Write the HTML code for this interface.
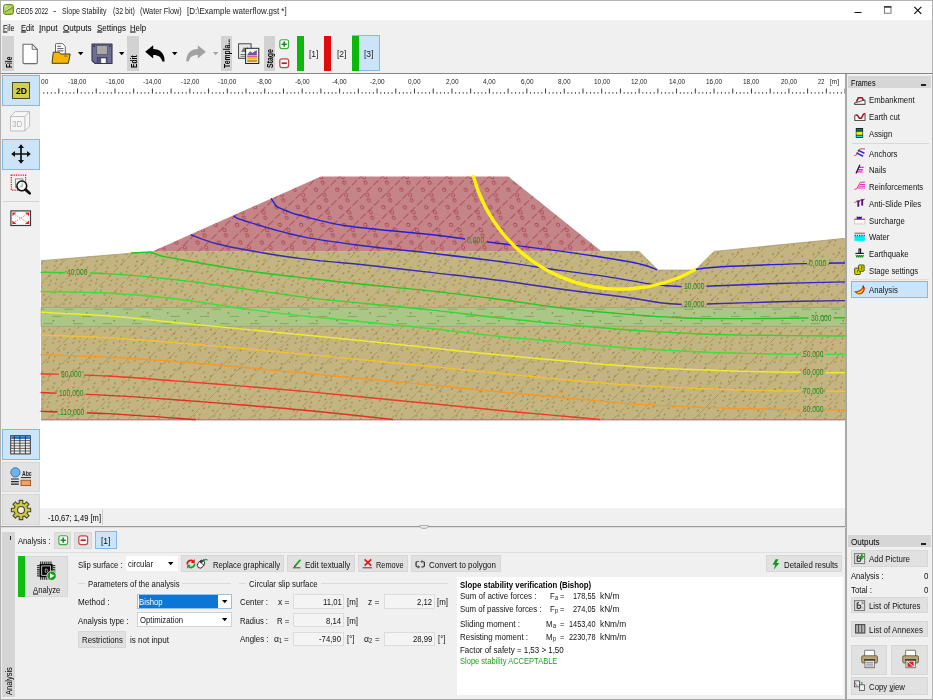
<!DOCTYPE html>
<html lang="en"><head><meta charset="utf-8"><title>GEO5 2022 - Slope Stability</title>
<style>
html,body{margin:0;padding:0}
body{width:933px;height:700px;position:relative;overflow:hidden;background:#f0f0f0;font-family:"Liberation Sans", sans-serif;font-size:18px;color:#000}
#app{position:absolute;left:0;top:0;width:933px;height:700px;will-change:transform;transform:translateZ(0)}
.a{position:absolute}
.t{position:absolute;white-space:nowrap;line-height:1;transform-origin:0 0;font-size:18px}
svg{position:absolute;overflow:visible}
u{text-decoration-thickness:1.6px;text-underline-offset:1.5px}

</style></head>
<body>
<div id="app">
<div class="a" style="left:0px;top:0px;width:933px;height:20px;background:#ffffff;"></div>
<svg style="left:3px;top:4px" width="11" height="11" viewBox="0 0 11 11"><defs><linearGradient id="gai" x1="0" y1="0" x2="1" y2="1"><stop offset="0" stop-color="#dfe9a8"/><stop offset=".45" stop-color="#a9c94e"/><stop offset="1" stop-color="#5d9a24"/></linearGradient></defs><rect x=".6" y=".6" width="9.8" height="9.8" rx="2" fill="url(#gai)" stroke="#4f8a1e" stroke-width="1"/><path d="M1.4 9.6L9.6 5.2V9Q9.6 9.6 9 9.6Z" fill="#c9da44" opacity=".85"/><path d="M2.2 7.6L8.8 3.4" stroke="#4a6a2a" stroke-width=".8"/><path d="M2.2 6.6L8.8 2.5" stroke="#f0f6d4" stroke-width=".8"/></svg>
<span class="t" style="left:16.10px;top:5.75px;color:#1a1a1a;transform:scale(0.3387,.5);">GEO5 2022</span>
<span class="t" style="left:53.10px;top:5.75px;color:#1a1a1a;transform:scale(0.5667,.5);">-</span>
<span class="t" style="left:61.70px;top:5.75px;color:#1a1a1a;transform:scale(0.3892,.5);">Slope Stability</span>
<span class="t" style="left:112.50px;top:5.75px;color:#1a1a1a;transform:scale(0.3909,.5);">(32 bit)</span>
<span class="t" style="left:139.90px;top:5.75px;color:#1a1a1a;transform:scale(0.4084,.5);">(Water Flow)</span>
<span class="t" style="left:186.50px;top:5.75px;color:#1a1a1a;transform:scale(0.4449,.5);">[D:\Example waterflow.gst *]</span>
<svg style="left:0;top:0" width="933" height="20" viewBox="0 0 933 20"><path d="M854.5 12.5H861.5" stroke="#111" stroke-width="1"/><rect x="884.4" y="6.9" width="6.6" height="6.3" fill="none" stroke="#6a6a6a" stroke-width=".9"/><path d="M884 6.9H891.4" stroke="#1a1a1a" stroke-width="1.3"/><path d="M914.3 6.8L921.3 13.8M921.3 6.8L914.3 13.8" stroke="#111" stroke-width="1.2"/></svg>
<span class="t" style="left:3.00px;top:23.15px;transform:scale(0.3963,.5);"><u>F</u>ile</span>
<span class="t" style="left:20.50px;top:23.15px;transform:scale(0.4189,.5);"><u>E</u>dit</span>
<span class="t" style="left:39.00px;top:23.15px;transform:scale(0.4618,.5);"><u>I</u>nput</span>
<span class="t" style="left:62.50px;top:23.15px;transform:scale(0.4519,.5);"><u>O</u>utputs</span>
<span class="t" style="left:96.50px;top:23.15px;transform:scale(0.4457,.5);"><u>S</u>ettings</span>
<span class="t" style="left:130.00px;top:23.15px;transform:scale(0.4321,.5);"><u>H</u>elp</span>
<div class="a" style="left:2px;top:35.6px;width:12.4px;height:35.4px;background:#d2d2d2;"></div>
<div class="a" style="left:127px;top:35.6px;width:11.8px;height:35.4px;background:#d2d2d2;"></div>
<div class="a" style="left:220.5px;top:35.6px;width:11.8px;height:35.4px;background:#d2d2d2;"></div>
<div class="a" style="left:263.8px;top:35.6px;width:11.7px;height:35.4px;background:#d2d2d2;"></div>
<span class="t" style="left:4.12px;top:68.20px;font-weight:bold;transform:rotate(-90deg) scale(0.3643,.5);">File</span>
<span class="t" style="left:128.72px;top:68.20px;font-weight:bold;transform:rotate(-90deg) scale(0.3706,.5);">Edit</span>
<span class="t" style="left:222.22px;top:68.40px;font-weight:bold;transform:rotate(-90deg) scale(0.3782,.5);">Templa...</span>
<span class="t" style="left:265.42px;top:68.40px;font-weight:bold;transform:rotate(-90deg) scale(0.3875,.5);">Stage</span>
<svg style="left:22px;top:42.5px" width="17" height="22" viewBox="0 0 17 22"><path d="M1 1.2H10.2L15.3 6.3V19.6Q15.3 20.6 14.3 20.6H2Q1 20.6 1 19.6Z" fill="#fff" stroke="#6e6e6e" stroke-width="1.1" stroke-linejoin="round"/><path d="M10.2 1.2V6.3H15.3" fill="none" stroke="#6e6e6e" stroke-width="1"/></svg>
<svg style="left:51px;top:42.5px" width="21" height="22" viewBox="0 0 21 22"><path d="M4.5 12V1.3Q4.5 .6 5.2 .6H11.5L14.3 3.4V12Z" fill="#fff" stroke="#555" stroke-width=".9"/><path d="M6.3 3.3H10M6.3 5.6H12.4M6.3 7.9H12.4" stroke="#444" stroke-width=".9"/><path d="M1 20.3L2.3 9.2H8.2L9.6 11H19.2L17.3 20.3Z" fill="#f7b500" stroke="#4a3a10" stroke-width="1" stroke-linejoin="round"/><path d="M13 13H16.4" stroke="#7a5a10" stroke-width=".9"/></svg>
<svg style="left:78px;top:51.8px" width="6" height="4" viewBox="0 0 6 4"><path d="M0 0H5.4L2.7 3.2Z" fill="#000"/></svg>
<svg style="left:91px;top:42.5px" width="22" height="22" viewBox="0 0 22 22"><path d="M1 1H21V20.5H4.2L1 17.5Z" fill="#6d6d98" stroke="#33334a" stroke-width="1.1" stroke-linejoin="round"/><rect x="5.6" y="2.6" width="10.8" height="9" fill="#a8a8a8" stroke="#55556e" stroke-width=".8"/><rect x="6.2" y="14.6" width="9.8" height="5.9" fill="#55557a" stroke="#33334a" stroke-width=".6"/><rect x="10.2" y="15.4" width="4.6" height="4.6" fill="#fff"/><rect x="2.3" y="2.3" width="1.6" height="1.6" fill="#33334a"/><rect x="18" y="2.3" width="1.6" height="1.6" fill="#33334a"/></svg>
<svg style="left:119px;top:51.8px" width="6" height="4" viewBox="0 0 6 4"><path d="M0 0H5.4L2.7 3.2Z" fill="#000"/></svg>
<svg style="left:144px;top:44px" width="22" height="19" viewBox="0 0 22 19"><path d="M1.2 7.8L9.2 1.2V5C16 5 20.8 9.4 20.6 17.4L18.4 17.6C17 12.9 14.4 10.9 9.2 11V14.6Z" fill="#000"/></svg>
<svg style="left:172.3px;top:51.8px" width="6" height="4" viewBox="0 0 6 4"><path d="M0 0H5.4L2.7 3.2Z" fill="#000"/></svg>
<svg style="left:185px;top:44px" width="22" height="19" viewBox="0 0 22 19"><path d="M20.8 7.8L12.8 1.2V5C6 5 1.2 9.4 1.4 17.4L3.6 17.6C5 12.9 7.6 10.9 12.8 11V14.6Z" fill="#a2a2a2"/></svg>
<svg style="left:213px;top:52px" width="6" height="4" viewBox="0 0 6 4"><path d="M0 0H5.4L2.7 3.2Z" fill="#a2a2a2"/></svg>
<svg style="left:237.5px;top:42.5px" width="22" height="22" viewBox="0 0 22 22"><rect x=".6" y=".8" width="12.5" height="14.5" fill="#e9e9e9" stroke="#333" stroke-width=".9"/><path d="M2.5 11.5H11M2.5 13.3H11" stroke="#555" stroke-width=".8"/><path d="M3 9L6 4L8 7L10 3.5V9Z" fill="#777"/><rect x="7.6" y="5.3" width="13.2" height="15.2" fill="#f4f4f4" stroke="#222" stroke-width="1"/><path d="M9.4 11.4L12.2 8.2L14.4 10L18.8 7V12.2H9.4Z" fill="#6a5a9a"/><rect x="9.2" y="12.6" width="10" height="2" fill="#e85aa0"/><rect x="9.2" y="14.8" width="10" height="2" fill="#f0c020"/><rect x="9.2" y="17" width="10" height="2.2" fill="#c89a28"/></svg>
<svg style="left:278.8px;top:38.6px" width="11" height="11" viewBox="0 0 11 11"><rect x=".8" y=".8" width="8.8" height="8.8" rx="2" fill="#f4fbf4" stroke="#3cae3c" stroke-width="1.1"/><path d="M5.2 2.6V7.8M2.6 5.2H7.8" stroke="#1a8a1a" stroke-width="1.5"/></svg>
<svg style="left:278.8px;top:57.5px" width="11" height="11" viewBox="0 0 11 11"><rect x=".8" y=".8" width="8.8" height="8.8" rx="2" fill="#fbf2f2" stroke="#c04848" stroke-width="1.2"/><path d="M2.6 5.2H7.8" stroke="#b02020" stroke-width="1.6"/></svg>
<div class="a" style="left:296.5px;top:35.8px;width:7.2px;height:35px;background:#0cb80c;"></div>
<span class="t" style="left:308.65px;top:49.35px;color:#222;transform:scale(0.4746,.5);">[1]</span>
<div class="a" style="left:324.3px;top:35.8px;width:7.1px;height:35px;background:#e20a0a;"></div>
<span class="t" style="left:336.55px;top:49.35px;color:#222;transform:scale(0.4746,.5);">[2]</span>
<div class="a" style="left:352px;top:35.2px;width:28px;height:36px;background:#cce4f7;border:1px solid #84b9e6;box-sizing:border-box;"></div>
<div class="a" style="left:352px;top:35.8px;width:7.1px;height:35px;background:#0cb80c;"></div>
<span class="t" style="left:364.25px;top:49.35px;color:#222;transform:scale(0.4746,.5);">[3]</span>
<div class="a" style="left:0px;top:73px;width:933px;height:1px;background:#868686;"></div>
<div class="a" style="left:0px;top:74px;width:1px;height:452px;background:#d9d9d9;"></div>
<div class="a" style="left:2px;top:75px;width:38.3px;height:31px;background:#cce4f7;border:1px solid #84b9e6;box-sizing:border-box;"></div>
<div class="a" style="left:12.2px;top:82.2px;width:17.6px;height:17px;background:#d2cd58;border:1px solid #4e4e26;box-sizing:border-box;"></div>
<span class="t" style="left:15.60px;top:85.99px;font-size:19.0px;font-weight:bold;transform:scale(0.4527,.5);">2D</span>
<svg style="left:10px;top:111px" width="21" height="21" viewBox="0 0 21 21"><path d="M.5 5.6L5.2 .6H19.6V15L14.9 20H.5Z" fill="#f7f7f7" stroke="#b8b8b8" stroke-width=".9" stroke-linejoin="round"/><path d="M.5 5.6H14.9V20M14.9 5.6L19.6 .6" fill="none" stroke="#b8b8b8" stroke-width=".9"/></svg>
<span class="t" style="left:12.45px;top:119.05px;color:#b4b4b4;transform:scale(0.4562,.5);">3D</span>
<div class="a" style="left:2px;top:138.6px;width:38.3px;height:31px;background:#cce4f7;border:1px solid #84b9e6;box-sizing:border-box;"></div>
<svg style="left:11px;top:144px" width="20" height="20" viewBox="0 0 20 20"><path d="M10 1.2V18.8M1.2 10H18.8" stroke="#111" stroke-width="1.7"/><path d="M10 .2L13 4H7ZM10 19.8L13 16H7ZM.2 10L4 7V13ZM19.8 10L16 7V13Z" fill="#111"/></svg>
<svg style="left:9.5px;top:173.5px" width="23" height="23" viewBox="0 0 23 23"><rect x="1.3" y="1.2" width="14.3" height="14.9" fill="none" stroke="#e02020" stroke-width="1.2" stroke-dasharray="1.3 1"/><rect x="5.4" y="4.9" width="7.4" height="8.4" fill="#f4f4f4" stroke="#777" stroke-width=".8"/><circle cx="11.8" cy="11.9" r="4.9" fill="#fff" fill-opacity=".75" stroke="#111" stroke-width="1.5"/><path d="M12.2 9.4V12.2H9.8" fill="none" stroke="#888" stroke-width=".7"/><path d="M15.6 15.6L19.6 19.2" stroke="#111" stroke-width="2.8" stroke-linecap="round"/></svg>
<div class="a" style="left:3px;top:201.2px;width:36px;height:1px;background:#d4d4d4;"></div>
<svg style="left:10px;top:209.5px" width="22" height="17" viewBox="0 0 22 17"><rect x=".9" y=".9" width="19.6" height="14.6" fill="#fff" stroke="#3a3a3a" stroke-width="1.2"/><path d="M4.6 4.2L16.8 12.2M16.8 4.2L4.6 12.2" stroke="#f07070" stroke-width=".9" stroke-dasharray="1.6 1"/><path d="M2.4 2.4H6.4L2.4 6Z M19 2.4H15L19 6Z M2.4 14H6.4L2.4 10.4Z M19 14H15L19 10.4Z" fill="#f01818"/></svg>
<div class="a" style="left:2px;top:429px;width:38.3px;height:31px;background:#cce4f7;border:1px solid #84b9e6;box-sizing:border-box;"></div>
<svg style="left:10.4px;top:434.6px" width="21" height="20" viewBox="0 0 21 20"><rect x=".7" y=".7" width="19.6" height="18.2" fill="#f2f2f2" stroke="#333" stroke-width="1"/><rect x="1.2" y="1.2" width="18.6" height="2.8" fill="#2a7ad8"/><path d="M1 5.6H20M1 8.2H20M1 10.8H20M1 13.4H20M1 16H20" stroke="#555" stroke-width=".9"/><path d="M4.3 1V19M9.9 1V19M15.4 1V19" stroke="#333" stroke-width=".9"/></svg>
<div class="a" style="left:2px;top:462.2px;width:38px;height:30.2px;background:#e2e2e2;border:1px solid #d7d7d7;box-sizing:border-box;"></div>
<svg style="left:10px;top:467px" width="23" height="21" viewBox="0 0 23 21"><circle cx="5.4" cy="5.4" r="4.6" fill="#6ab4f0" stroke="#2a5a8a" stroke-width=".8"/><path d="M1 12H8.8M1 14.6H8.8M1 17.2H8.8" stroke="#222" stroke-width="1.2"/><rect x="11" y="13.2" width="9.6" height="5.4" fill="#f4a060" stroke="#8a4a1a" stroke-width=".8"/><path d="M11 10.6H21" stroke="#222" stroke-width="1"/></svg>
<span class="t" style="left:21.50px;top:469.78px;font-size:14px;font-weight:bold;color:#222;transform:scale(0.3629,.5);">Abc</span>
<div class="a" style="left:2px;top:494px;width:38px;height:31.2px;background:#e2e2e2;border:1px solid #d7d7d7;box-sizing:border-box;"></div>
<svg style="left:11.3px;top:499.9px" width="20" height="20" viewBox="0 0 20 20"><g transform="translate(10 10)"><path d="M-1.75 -6.78L-1.79 -9.64L1.79 -9.64L1.75 -6.78L3.55 -6.03L5.55 -8.08L8.08 -5.55L6.03 -3.55L6.78 -1.75L9.64 -1.79L9.64 1.79L6.78 1.75L6.03 3.55L8.08 5.55L5.55 8.08L3.55 6.03L1.75 6.78L1.79 9.64L-1.79 9.64L-1.75 6.78L-3.55 6.03L-5.55 8.08L-8.08 5.55L-6.03 3.55L-6.78 1.75L-9.64 1.79L-9.64 -1.79L-6.78 -1.75L-6.03 -3.55L-8.08 -5.55L-5.55 -8.08L-3.55 -6.03Z" fill="#c9c84a" stroke="#4a4a22" stroke-width="1.1" stroke-linejoin="round"/><circle r="3.5" fill="#ececec" stroke="#4a4a22" stroke-width="1.1"/></g></svg>
<div class="a" style="left:40px;top:74px;width:806px;height:434px;background:#ffffff;"></div>
<svg width="933" height="700" viewBox="0 0 933 700" style="left:0;top:0"><defs><pattern id="ps" width="20.2" height="19.3" patternUnits="userSpaceOnUse" patternTransform="translate(726.5 336.5) skewX(-15.9)"><rect width="20.2" height="19.3" fill="#c4b481"/><circle cx="0.6" cy="0.8" r=".85" fill="#9a853f"/><circle cx="0.6" cy="5.0" r=".85" fill="#9a853f"/><circle cx="15.1" cy="6.3" r=".85" fill="#9a853f"/><circle cx="7.7" cy="8.2" r=".85" fill="#9a853f"/><circle cx="7.7" cy="12.4" r=".85" fill="#9a853f"/><circle cx="2.9" cy="14.0" r=".85" fill="#9a853f"/><circle cx="15.4" cy="2.1" r=".85" fill="#9a853f"/><circle cx="12.6" cy="16.3" r=".85" fill="#9a853f"/></pattern><pattern id="pe" width="21.4" height="17.6" patternUnits="userSpaceOnUse" patternTransform="translate(380 180) skewX(10.9)"><rect width="21.4" height="17.6" fill="#c58588"/><circle cx="6.4" cy="2.6" r="1.5" fill="#d29498" stroke="#aa4a54" stroke-width="1"/><circle cx="19.6" cy="9.7" r="1.5" fill="#d29498" stroke="#aa4a54" stroke-width="1"/><circle cx="5.9" cy="14.8" r="1.5" fill="#d29498" stroke="#aa4a54" stroke-width="1"/><circle cx="-1.8" cy="9.7" r="1.5" fill="#d29498" stroke="#aa4a54" stroke-width="1"/><circle cx="27.3" cy="14.8" r="1.5" fill="#d29498" stroke="#aa4a54" stroke-width="1"/></pattern><pattern id="pc" width="26" height="10" patternUnits="userSpaceOnUse" patternTransform="translate(44 307)"><rect width="26" height="10" fill="#abc687"/><path d="M2 2.5H11M15 7.5H24" stroke="#84aa5a" stroke-width=".8" opacity=".8"/></pattern><clipPath id="cl"><path d="M0 0H933V700H0ZM465.1 236.6h21.8v8h-21.8ZM807.1 259.3h21.8v8h-21.8ZM681.7 282.4h25.0v8h-25.0ZM681.7 300.0h25.0v8h-25.0ZM808.5 314.0h25.0v8h-25.0ZM65.1 268.6h25.0v8h-25.0ZM800.8 350.3h25.0v8h-25.0ZM800.8 368.4h25.0v8h-25.0ZM800.8 387.0h25.0v8h-25.0ZM800.8 405.7h25.0v8h-25.0ZM58.9 370.6h25.0v8h-25.0ZM56.6 389.2h29.0v8h-29.0ZM57.7 407.9h29.0v8h-29.0Z" clip-rule="evenodd"/></clipPath></defs><path d="M58.82 88.5V93.6M77.54 88.5V93.6M96.26 88.5V93.6M114.98 88.5V93.6M133.70 88.5V93.6M152.42 88.5V93.6M171.14 88.5V93.6M189.86 88.5V93.6M208.58 88.5V93.6M227.30 88.5V93.6M246.02 88.5V93.6M264.74 88.5V93.6M283.46 88.5V93.6M302.18 88.5V93.6M320.90 88.5V93.6M339.62 88.5V93.6M358.34 88.5V93.6M377.06 88.5V93.6M395.78 88.5V93.6M414.50 88.5V93.6M433.22 88.5V93.6M451.94 88.5V93.6M470.66 88.5V93.6M489.38 88.5V93.6M508.10 88.5V93.6M526.82 88.5V93.6M545.54 88.5V93.6M564.26 88.5V93.6M582.98 88.5V93.6M601.70 88.5V93.6M620.42 88.5V93.6M639.14 88.5V93.6M657.86 88.5V93.6M676.58 88.5V93.6M695.30 88.5V93.6M714.02 88.5V93.6M732.74 88.5V93.6M751.46 88.5V93.6M770.18 88.5V93.6M788.90 88.5V93.6M807.62 88.5V93.6M826.34 88.5V93.6M845.06 88.5V93.6" stroke="#3a3a3a" stroke-width="1" fill="none"/><path d="M43.84 92V93.8M47.59 92V93.8M51.33 92V93.8M55.08 92V93.8M62.56 92V93.8M66.31 92V93.8M70.05 92V93.8M73.80 92V93.8M81.28 92V93.8M85.03 92V93.8M88.77 92V93.8M92.52 92V93.8M100.00 92V93.8M103.75 92V93.8M107.49 92V93.8M111.24 92V93.8M118.72 92V93.8M122.47 92V93.8M126.21 92V93.8M129.96 92V93.8M137.44 92V93.8M141.19 92V93.8M144.93 92V93.8M148.68 92V93.8M156.16 92V93.8M159.91 92V93.8M163.65 92V93.8M167.40 92V93.8M174.88 92V93.8M178.63 92V93.8M182.37 92V93.8M186.12 92V93.8M193.60 92V93.8M197.35 92V93.8M201.09 92V93.8M204.84 92V93.8M212.32 92V93.8M216.07 92V93.8M219.81 92V93.8M223.56 92V93.8M231.04 92V93.8M234.79 92V93.8M238.53 92V93.8M242.28 92V93.8M249.76 92V93.8M253.51 92V93.8M257.25 92V93.8M261.00 92V93.8M268.48 92V93.8M272.23 92V93.8M275.97 92V93.8M279.72 92V93.8M287.20 92V93.8M290.95 92V93.8M294.69 92V93.8M298.44 92V93.8M305.92 92V93.8M309.67 92V93.8M313.41 92V93.8M317.16 92V93.8M324.64 92V93.8M328.39 92V93.8M332.13 92V93.8M335.88 92V93.8M343.36 92V93.8M347.11 92V93.8M350.85 92V93.8M354.60 92V93.8M362.08 92V93.8M365.83 92V93.8M369.57 92V93.8M373.32 92V93.8M380.80 92V93.8M384.55 92V93.8M388.29 92V93.8M392.04 92V93.8M399.52 92V93.8M403.27 92V93.8M407.01 92V93.8M410.76 92V93.8M418.24 92V93.8M421.99 92V93.8M425.73 92V93.8M429.48 92V93.8M436.96 92V93.8M440.71 92V93.8M444.45 92V93.8M448.20 92V93.8M455.68 92V93.8M459.43 92V93.8M463.17 92V93.8M466.92 92V93.8M474.40 92V93.8M478.15 92V93.8M481.89 92V93.8M485.64 92V93.8M493.12 92V93.8M496.87 92V93.8M500.61 92V93.8M504.36 92V93.8M511.84 92V93.8M515.59 92V93.8M519.33 92V93.8M523.08 92V93.8M530.56 92V93.8M534.31 92V93.8M538.05 92V93.8M541.80 92V93.8M549.28 92V93.8M553.03 92V93.8M556.77 92V93.8M560.52 92V93.8M568.00 92V93.8M571.75 92V93.8M575.49 92V93.8M579.24 92V93.8M586.72 92V93.8M590.47 92V93.8M594.21 92V93.8M597.96 92V93.8M605.44 92V93.8M609.19 92V93.8M612.93 92V93.8M616.68 92V93.8M624.16 92V93.8M627.91 92V93.8M631.65 92V93.8M635.40 92V93.8M642.88 92V93.8M646.63 92V93.8M650.37 92V93.8M654.12 92V93.8M661.60 92V93.8M665.35 92V93.8M669.09 92V93.8M672.84 92V93.8M680.32 92V93.8M684.07 92V93.8M687.81 92V93.8M691.56 92V93.8M699.04 92V93.8M702.79 92V93.8M706.53 92V93.8M710.28 92V93.8M717.76 92V93.8M721.51 92V93.8M725.25 92V93.8M729.00 92V93.8M736.48 92V93.8M740.23 92V93.8M743.97 92V93.8M747.72 92V93.8M755.20 92V93.8M758.95 92V93.8M762.69 92V93.8M766.44 92V93.8M773.92 92V93.8M777.67 92V93.8M781.41 92V93.8M785.16 92V93.8M792.64 92V93.8M796.39 92V93.8M800.13 92V93.8M803.88 92V93.8M811.36 92V93.8M815.11 92V93.8M818.85 92V93.8M822.60 92V93.8M830.08 92V93.8M833.83 92V93.8M837.57 92V93.8M841.32 92V93.8" stroke="#555" stroke-width="1" fill="none"/><polygon points="41.0,260.7 152.4,251.4 601.7,251.4 639.1,251.4 657.9,270.1 695.3,270.1 714.0,251.4 845.4,238.3 845.4,419.9 41.0,419.9" fill="url(#ps)"/><clipPath id="cg"><polygon points="41.0,260.7 152.4,251.4 601.7,251.4 639.1,251.4 657.9,270.1 695.3,270.1 714.0,251.4 845.4,238.3 845.4,419.9 41.0,419.9"/></clipPath><clipPath id="ce"><polygon points="152.4,251.4 320.9,176.5 508.1,176.5 601.7,251.4"/></clipPath><path d="M-196.8 421L-11.8 236M-176.6 421L8.4 236M-156.4 421L28.6 236M-136.2 421L48.8 236M-116.0 421L69.0 236M-95.8 421L89.2 236M-75.6 421L109.4 236M-55.4 421L129.6 236M-35.2 421L149.8 236M-15.0 421L170.0 236M5.2 421L190.2 236M25.4 421L210.4 236M45.6 421L230.6 236M65.8 421L250.8 236M86.0 421L271.0 236M106.2 421L291.2 236M126.4 421L311.4 236M146.6 421L331.6 236M166.8 421L351.8 236M187.0 421L372.0 236M207.2 421L392.2 236M227.4 421L412.4 236M247.6 421L432.6 236M267.8 421L452.8 236M288.0 421L473.0 236M308.2 421L493.2 236M328.4 421L513.4 236M348.6 421L533.6 236M368.8 421L553.8 236M389.0 421L574.0 236M409.2 421L594.2 236M429.4 421L614.4 236M449.6 421L634.6 236M469.8 421L654.8 236M490.0 421L675.0 236M510.2 421L695.2 236M530.4 421L715.4 236M550.6 421L735.6 236M570.8 421L755.8 236M591.0 421L776.0 236M611.2 421L796.2 236M631.4 421L816.4 236M651.6 421L836.6 236M671.8 421L856.8 236M692.0 421L877.0 236M712.2 421L897.2 236M732.4 421L917.4 236M752.6 421L937.6 236M772.8 421L957.8 236M793.0 421L978.0 236M813.2 421L998.2 236M833.4 421L1018.4 236M853.6 421L1038.6 236M873.8 421L1058.8 236M894.0 421L1079.0 236" clip-path="url(#cg)" stroke="#9a853f" stroke-width="1" stroke-dasharray="7.8 2.2" opacity=".62" fill="none"/><polygon points="41.0,307.5 845.4,307.5 845.4,326.3 41.0,326.3" fill="#abc687" stroke="#96a27a" stroke-width=".7"/><clipPath id="cc"><rect x="41.0" y="307.5" width="804.4" height="18.7"/></clipPath><path d="M34.7 309.2H845.4" stroke="#84aa5a" stroke-width="1" stroke-dasharray="9.4 20.10" clip-path="url(#cc)"/><path d="M23.0 316.4H845.4" stroke="#84aa5a" stroke-width="1" stroke-dasharray="9.4 20.10" clip-path="url(#cc)"/><path d="M14.1 323.6H845.4" stroke="#84aa5a" stroke-width="1" stroke-dasharray="9.4 20.10" clip-path="url(#cc)"/><path d="M25.1 313.0H845.4" stroke="#6f9f4e" stroke-width="1.5" stroke-dasharray="1.6 18.65" clip-path="url(#cc)"/><path d="M32.4 320.7H845.4" stroke="#6f9f4e" stroke-width="1.5" stroke-dasharray="1.6 18.65" clip-path="url(#cc)"/><polygon points="152.4,251.4 320.9,176.5 508.1,176.5 601.7,251.4" fill="url(#pe)"/><path d="M69.2 252.5L148.0 175.5M90.6 252.5L169.4 175.5M112.0 252.5L190.8 175.5M133.4 252.5L212.2 175.5M154.8 252.5L233.6 175.5M176.2 252.5L255.0 175.5M197.6 252.5L276.4 175.5M219.0 252.5L297.8 175.5M240.4 252.5L319.1 175.5M261.8 252.5L340.6 175.5M283.2 252.5L361.9 175.5M304.6 252.5L383.4 175.5M326.0 252.5L404.8 175.5M347.4 252.5L426.1 175.5M368.8 252.5L447.6 175.5M390.2 252.5L468.9 175.5M411.6 252.5L490.4 175.5M433.0 252.5L511.8 175.5M454.4 252.5L533.1 175.5M475.8 252.5L554.5 175.5M497.2 252.5L576.0 175.5M518.6 252.5L597.4 175.5M540.0 252.5L618.8 175.5M561.4 252.5L640.1 175.5M582.8 252.5L661.5 175.5" clip-path="url(#ce)" stroke="#aa4a54" stroke-width="1.15" stroke-dasharray="7.4 2.2" opacity=".72" fill="none"/><polyline points="41.0,260.7 152.4,251.4" fill="none" stroke="#a09468" stroke-width=".7"/><polyline points="601.7,251.4 639.1,251.4 657.9,270.1 695.3,270.1 714.0,251.4 845.4,238.3" fill="none" stroke="#a09468" stroke-width=".7"/><path d="M41.0 419.9H845.4" stroke="#a8607c" stroke-width="1" opacity=".85"/><g clip-path="url(#cl)" fill="none" stroke-width="1.45" stroke-linecap="butt"><path d="M276.6 206.6C278.3 207.3 283.1 209.6 287.0 211.0C290.9 212.4 289.9 212.8 300.0 215.3C310.1 217.8 325.1 222.7 347.6 226.0C370.1 229.3 413.4 232.6 434.8 235.0C456.2 237.4 455.1 237.8 476.0 240.5C496.9 243.2 538.2 248.2 560.0 251.1C581.8 254.0 593.1 255.8 606.6 258.0C620.1 260.2 632.4 262.2 640.8 264.2C649.2 266.2 654.3 268.9 657.0 269.8" stroke="#2a1cd6"/><path d="M695.2 269.5C699.6 269.0 703.2 267.7 721.6 266.7C740.0 265.7 785.0 264.2 805.6 263.6C826.2 263.0 838.9 263.1 845.5 263.0" stroke="#2a1cd6"/><path d="M233.4 215.8C235.3 216.7 233.3 217.5 245.0 221.0C256.7 224.5 282.9 232.7 303.7 236.9C324.5 241.2 348.1 243.7 370.0 246.5C391.9 249.3 413.1 251.1 434.8 253.6C456.5 256.1 479.1 258.7 500.0 261.5C520.9 264.3 542.2 267.9 560.0 270.4C577.8 272.9 591.1 274.3 606.6 276.6C622.1 278.9 640.8 282.7 653.2 284.4C665.6 286.1 672.4 286.3 681.2 286.6C690.0 286.9 689.9 286.8 706.0 286.3C722.1 285.8 754.4 284.2 777.6 283.5C800.9 282.8 834.2 282.2 845.5 281.9" stroke="#3024c4"/><path d="M190.7 234.7C194.9 236.2 205.1 240.7 215.8 243.5C226.5 246.3 240.3 248.9 255.0 251.5C269.6 254.1 284.5 256.6 303.7 258.9C322.9 261.2 348.1 263.2 370.0 265.5C391.9 267.8 413.1 270.4 434.8 272.9C456.5 275.4 479.1 277.8 500.0 280.5C520.9 283.2 539.6 286.3 560.0 289.0C580.4 291.7 605.1 294.5 622.2 296.8C639.3 299.1 652.8 301.8 662.6 303.0C672.4 304.2 674.0 304.1 681.2 304.3C688.4 304.5 689.9 304.4 706.0 304.0C722.1 303.6 754.4 302.4 777.6 301.8C800.9 301.2 834.2 300.8 845.5 300.6" stroke="#382cb0"/><path d="M131.0 253.0C134.2 252.9 144.9 252.0 150.0 252.5C155.1 253.0 157.3 255.0 161.5 256.0C165.7 257.0 161.5 256.1 175.0 258.5C188.5 260.9 220.1 266.8 242.6 270.1C265.1 273.4 288.8 276.0 310.0 278.5C331.2 281.0 349.2 282.9 370.0 285.0C390.8 287.1 413.1 289.0 434.8 291.4C456.5 293.8 479.1 296.8 500.0 299.5C520.9 302.2 539.6 305.3 560.0 307.7C580.4 310.1 601.5 312.2 622.2 313.9C642.9 315.6 663.6 317.2 684.3 318.0C705.0 318.8 725.8 318.6 746.5 318.6C767.2 318.6 792.2 318.1 808.7 318.0C825.2 317.9 839.4 317.8 845.5 317.7" stroke="#22c822"/><path d="M40.5 272.4C51.6 272.6 85.0 272.4 107.4 273.6C129.8 274.8 152.4 277.1 174.9 279.6C197.4 282.1 220.1 285.6 242.6 288.6C265.1 291.7 288.8 295.3 310.0 297.9C331.2 300.5 349.2 301.9 370.0 304.0C390.8 306.1 413.1 308.1 434.8 310.4C456.5 312.7 479.1 315.8 500.0 318.0C520.9 320.2 539.6 322.0 560.0 323.9C580.4 325.8 601.5 327.9 622.2 329.5C642.9 331.1 663.6 332.3 684.3 333.2C705.0 334.1 719.6 334.6 746.5 335.1C773.4 335.6 829.0 335.9 845.5 336.0" stroke="#2fd82f"/><path d="M40.5 291.5C51.6 291.8 85.0 291.8 107.4 293.0C129.8 294.2 152.4 296.1 174.9 298.7C197.4 301.3 221.8 305.8 242.6 308.6C263.4 311.4 278.8 313.3 300.0 315.6C321.2 317.9 347.5 320.3 370.0 322.5C392.5 324.7 413.1 326.7 434.8 329.0C456.5 331.3 479.1 334.4 500.0 336.5C520.9 338.6 539.6 340.1 560.0 341.9C580.4 343.7 601.5 345.9 622.2 347.5C642.9 349.1 663.6 350.2 684.3 351.2C705.0 352.2 727.3 352.9 746.5 353.4C765.7 353.9 782.8 354.1 799.3 354.3C815.8 354.5 837.8 354.3 845.5 354.3" stroke="#3ee03a"/><path d="M40.5 312.3C51.6 312.9 85.0 314.1 107.4 315.8C129.8 317.5 152.4 320.3 174.9 322.5C197.4 324.7 220.1 326.9 242.6 329.1C265.1 331.3 288.8 333.4 310.0 335.5C331.2 337.6 349.2 339.4 370.0 341.5C390.8 343.6 413.1 346.1 434.8 348.3C456.5 350.6 479.1 353.0 500.0 355.0C520.9 357.0 539.6 358.7 560.0 360.5C580.4 362.3 601.5 364.3 622.2 365.8C642.9 367.3 663.6 368.4 684.3 369.3C705.0 370.2 727.3 370.9 746.5 371.4C765.7 371.9 782.8 372.1 799.3 372.3C815.8 372.5 837.8 372.6 845.5 372.7" stroke="#ecec30"/><path d="M40.5 334.9C51.6 335.4 85.0 336.5 107.4 337.8C129.8 339.1 152.4 340.9 174.9 342.7C197.4 344.5 220.1 346.5 242.6 348.5C265.1 350.5 288.8 352.9 310.0 354.9C331.2 356.9 349.2 358.5 370.0 360.5C390.8 362.5 413.1 364.6 434.8 366.8C456.5 369.0 479.1 371.4 500.0 373.5C520.9 375.6 539.6 377.4 560.0 379.2C580.4 381.0 601.5 383.1 622.2 384.5C642.9 385.9 663.6 387.0 684.3 387.9C705.0 388.8 727.3 389.6 746.5 390.1C765.7 390.6 782.8 390.8 799.3 391.0C815.8 391.2 837.8 391.2 845.5 391.3" stroke="#f4c030"/><path d="M40.5 354.6C51.6 355.0 85.0 356.1 107.4 357.2C129.8 358.3 152.4 359.8 174.9 361.5C197.4 363.2 220.1 365.3 242.6 367.3C265.1 369.3 288.8 371.7 310.0 373.7C331.2 375.7 349.2 377.4 370.0 379.3C390.8 381.2 413.1 383.3 434.8 385.4C456.5 387.5 479.1 390.0 500.0 392.0C520.9 394.0 539.6 395.3 560.0 397.2C580.4 399.1 601.5 401.5 622.2 403.1C642.9 404.7 663.6 405.7 684.3 406.6C705.0 407.5 727.3 408.2 746.5 408.7C765.7 409.2 782.8 409.5 799.3 409.7C815.8 409.9 837.8 409.9 845.5 410.0" stroke="#f49a28"/><path d="M40.5 373.7C51.6 374.1 85.0 374.8 107.4 376.0C129.8 377.2 152.4 379.2 174.9 380.9C197.4 382.6 220.1 384.3 242.6 386.1C265.1 387.9 288.8 389.9 310.0 391.9C331.2 393.8 349.2 395.8 370.0 397.8C390.8 399.8 413.1 401.9 434.8 404.0C456.5 406.1 479.1 408.5 500.0 410.5C520.9 412.5 543.3 414.4 560.0 415.9C576.7 417.4 593.7 418.9 600.4 419.5" stroke="#ee3a28"/><path d="M40.5 392.5C51.6 393.0 85.0 394.2 107.4 395.4C129.8 396.6 152.4 398.1 174.9 399.7C197.4 401.3 220.1 403.2 242.6 405.0C265.1 406.8 284.9 408.3 310.0 410.7C335.1 413.1 379.2 418.0 393.0 419.5" stroke="#e23024"/><path d="M40.5 411.3C51.6 411.7 81.5 412.2 107.4 413.6C133.3 415.0 181.2 418.5 196.0 419.5" stroke="#d62a22"/><path d="M271.4 198.8L276.6 206.6" stroke="#2a1cd6" stroke-linecap="round"/></g><path d="M473.5 176.5A152.4 152.4 0 0 0 694.5 270.1" fill="none" stroke="#fff30c" stroke-width="3.3" stroke-linecap="round"/></svg>
<span class="t" style="left:41.30px;top:78.18px;font-size:14px;color:#222;transform:scale(0.4686,.5);">00</span>
<span class="t" style="left:68.41px;top:78.18px;font-size:14px;color:#222;transform:scale(0.4600,.5);">-18,00</span>
<span class="t" style="left:105.85px;top:78.18px;font-size:14px;color:#222;transform:scale(0.4600,.5);">-16,00</span>
<span class="t" style="left:143.29px;top:78.18px;font-size:14px;color:#222;transform:scale(0.4600,.5);">-14,00</span>
<span class="t" style="left:180.73px;top:78.18px;font-size:14px;color:#222;transform:scale(0.4600,.5);">-12,00</span>
<span class="t" style="left:218.17px;top:78.18px;font-size:14px;color:#222;transform:scale(0.4600,.5);">-10,00</span>
<span class="t" style="left:257.40px;top:78.18px;font-size:14px;color:#222;transform:scale(0.4600,.5);">-8,00</span>
<span class="t" style="left:294.84px;top:78.18px;font-size:14px;color:#222;transform:scale(0.4600,.5);">-6,00</span>
<span class="t" style="left:332.28px;top:78.18px;font-size:14px;color:#222;transform:scale(0.4600,.5);">-4,00</span>
<span class="t" style="left:369.72px;top:78.18px;font-size:14px;color:#222;transform:scale(0.4600,.5);">-2,00</span>
<span class="t" style="left:408.23px;top:78.18px;font-size:14px;color:#222;transform:scale(0.4600,.5);">0,00</span>
<span class="t" style="left:445.67px;top:78.18px;font-size:14px;color:#222;transform:scale(0.4600,.5);">2,00</span>
<span class="t" style="left:483.11px;top:78.18px;font-size:14px;color:#222;transform:scale(0.4600,.5);">4,00</span>
<span class="t" style="left:520.55px;top:78.18px;font-size:14px;color:#222;transform:scale(0.4600,.5);">6,00</span>
<span class="t" style="left:557.99px;top:78.18px;font-size:14px;color:#222;transform:scale(0.4600,.5);">8,00</span>
<span class="t" style="left:593.64px;top:78.18px;font-size:14px;color:#222;transform:scale(0.4600,.5);">10,00</span>
<span class="t" style="left:631.08px;top:78.18px;font-size:14px;color:#222;transform:scale(0.4600,.5);">12,00</span>
<span class="t" style="left:668.52px;top:78.18px;font-size:14px;color:#222;transform:scale(0.4600,.5);">14,00</span>
<span class="t" style="left:705.96px;top:78.18px;font-size:14px;color:#222;transform:scale(0.4600,.5);">16,00</span>
<span class="t" style="left:743.40px;top:78.18px;font-size:14px;color:#222;transform:scale(0.4600,.5);">18,00</span>
<span class="t" style="left:780.84px;top:78.18px;font-size:14px;color:#222;transform:scale(0.4600,.5);">20,00</span>
<span class="t" style="left:817.90px;top:78.18px;font-size:14px;color:#222;transform:scale(0.4044,.5);">22</span>
<span class="t" style="left:830.40px;top:78.18px;font-size:14px;color:#222;transform:scale(0.4627,.5);">[m]</span>
<span class="t" style="left:467.40px;top:236.36px;font-size:17.2px;color:#238a1c;transform:scale(0.3999,.5);">0,000</span>
<span class="t" style="left:809.40px;top:259.06px;font-size:17.2px;color:#238a1c;transform:scale(0.3999,.5);">0,000</span>
<span class="t" style="left:684.00px;top:282.16px;font-size:17.2px;color:#238a1c;transform:scale(0.3880,.5);">10,000</span>
<span class="t" style="left:684.00px;top:299.76px;font-size:17.2px;color:#238a1c;transform:scale(0.3880,.5);">20,000</span>
<span class="t" style="left:810.80px;top:313.76px;font-size:17.2px;color:#238a1c;transform:scale(0.3880,.5);">30,000</span>
<span class="t" style="left:67.40px;top:268.36px;font-size:17.2px;color:#238a1c;transform:scale(0.3880,.5);">40,000</span>
<span class="t" style="left:803.10px;top:350.06px;font-size:17.2px;color:#238a1c;transform:scale(0.3880,.5);">50,000</span>
<span class="t" style="left:803.10px;top:368.16px;font-size:17.2px;color:#238a1c;transform:scale(0.3880,.5);">60,000</span>
<span class="t" style="left:803.10px;top:386.76px;font-size:17.2px;color:#238a1c;transform:scale(0.3880,.5);">70,000</span>
<span class="t" style="left:803.10px;top:405.46px;font-size:17.2px;color:#238a1c;transform:scale(0.3880,.5);">80,000</span>
<span class="t" style="left:61.20px;top:370.36px;font-size:17.2px;color:#238a1c;transform:scale(0.3880,.5);">90,000</span>
<span class="t" style="left:58.90px;top:388.96px;font-size:17.2px;color:#238a1c;transform:scale(0.3927,.5);">100,000</span>
<span class="t" style="left:60.00px;top:407.66px;font-size:17.2px;color:#238a1c;transform:scale(0.4009,.5);">110,000</span>
<div class="a" style="left:40px;top:508px;width:806px;height:17px;background:#f0f0f0;"></div>
<div class="a" style="left:102px;top:509px;width:1px;height:16px;background:#d0d0d0;"></div>
<span class="t" style="left:48.00px;top:513.35px;transform:scale(0.4204,.5);">-10,67; 1,49 [m]</span>
<div class="a" style="left:845.4px;top:74px;width:1.8px;height:626px;background:#a8a8a8;"></div>
<div class="a" style="left:848.2px;top:76px;width:83px;height:11.6px;background:#d6d6d6;"></div>
<span class="t" style="left:851.00px;top:77.95px;transform:scale(0.4015,.5);">Frames</span>
<div class="a" style="left:921.2px;top:84.2px;width:4.6px;height:1.8px;background:#222;"></div>
<svg style="left:854px;top:95px" width="12" height="12" viewBox="0 0 12 12"><path d="M.5 8L10.6 5Q11 5 11 5.5V9Q11 9.4 10.6 9.4H1Q.5 9.4 .5 9Z" fill="#fff" stroke="#555" stroke-width="1.1" stroke-linejoin="round"/><path d="M2.5 6.6L4.4 2.7H8L9.7 5.5" fill="none" stroke="#a0101c" stroke-width="1.5" stroke-linejoin="round"/></svg>
<span class="t" style="left:868.70px;top:95.45px;color:#111;transform:scale(0.4300,.5);">Embankment</span>
<svg style="left:854px;top:112px" width="12" height="12" viewBox="0 0 12 12"><path d="M.8 3V8.5H11V1.6" fill="#fff" stroke="#555" stroke-width="1.1" stroke-linejoin="round"/><path d="M1.4 3L3.6 3.3L5.2 6.2H7.4L9.3 2.3L10.9 1.5" fill="none" stroke="#a0101c" stroke-width="1.5" stroke-linejoin="round"/></svg>
<span class="t" style="left:868.70px;top:112.05px;color:#111;transform:scale(0.4300,.5);">Earth cut</span>
<svg style="left:854px;top:127px" width="12" height="12" viewBox="0 0 12 12"><rect x="1.8" y="1" width="7.3" height="9.9" fill="#0c2c2c"/><rect x="2.6" y="2.4" width="5.7" height="1" fill="#18a0a0"/><rect x="2.4" y="4.7" width="6.1" height="3.1" fill="#f2f000"/><rect x="2.4" y="8.6" width="6.1" height="1.4" fill="#00e8e8"/></svg>
<span class="t" style="left:868.70px;top:128.95px;color:#111;transform:scale(0.4300,.5);">Assign</span>
<svg style="left:854px;top:147px" width="12" height="12" viewBox="0 0 12 12"><path d="M.3 8.5L2.4 8.1L5.9 1.9H11" fill="none" stroke="#d84848" stroke-width="1"/><path d="M3.9 3.1L10.4 6.2M2.4 5.9L9.1 9.2" stroke="#3030e0" stroke-width="1.6"/></svg>
<span class="t" style="left:868.70px;top:148.55px;color:#111;transform:scale(0.4300,.5);">Anchors</span>
<svg style="left:854px;top:164px" width="12" height="12" viewBox="0 0 12 12"><path d="M4.1 3.3H9.7M3.3 5.7H8.9M2.4 7.9H8.5" stroke="#f024e4" stroke-width="1.35"/><path d="M2 9.4L5.9 .7" stroke="#2a0a2a" stroke-width="1.2"/></svg>
<span class="t" style="left:868.70px;top:165.45px;color:#111;transform:scale(0.4300,.5);">Nails</span>
<svg style="left:854px;top:180px" width="12" height="12" viewBox="0 0 12 12"><path d="M.5 9.4L2.9 8.7L6.3 2.3L11 2.1" fill="none" stroke="#c84850" stroke-width="1"/><path d="M5.9 4.4H11M4.8 6.15H11M3.9 7.9H11" stroke="#f024e4" stroke-width="1.05"/></svg>
<span class="t" style="left:868.70px;top:182.05px;color:#111;transform:scale(0.4300,.5);">Reinforcements</span>
<svg style="left:854px;top:198px" width="12" height="12" viewBox="0 0 12 12"><path d="M.3 4.5L11 1" stroke="#c85050" stroke-width=".9"/><rect x="3.4" y="2.5" width="1.8" height="6.2" fill="#50106e"/><rect x="7.3" y="1.2" width="1.8" height="6.4" fill="#50106e"/><path d="M2.4 3.2H6M6.4 1.9H10" stroke="#701a80" stroke-width=".9"/></svg>
<span class="t" style="left:868.70px;top:198.75px;color:#111;transform:scale(0.4300,.5);">Anti-Slide Piles</span>
<svg style="left:854px;top:214px" width="12" height="12" viewBox="0 0 12 12"><rect x=".5" y="5.3" width="10.4" height="4.6" fill="#fff" stroke="#c4c4c4" stroke-width=".8"/><path d="M2.7 2.4H3.7V3H4.7V2.4H5.7V3H6.7V2.4H7.8V5H2.7Z" fill="#1818d8"/><path d="M.3 5.2H11" stroke="#a83838" stroke-width="1"/></svg>
<span class="t" style="left:868.70px;top:215.55px;color:#111;transform:scale(0.4300,.5);">Surcharge</span>
<svg style="left:854px;top:231px" width="12" height="12" viewBox="0 0 12 12"><rect x=".5" y="5" width="10.3" height="4.9" fill="#00f0f0"/><path d="M.6 4.5H10.8" stroke="#1a3af0" stroke-width="1.3" stroke-dasharray="1.3 .95"/><path d="M.5 2.2H10.8" stroke="#b84040" stroke-width="1"/></svg>
<span class="t" style="left:868.70px;top:232.35px;color:#111;transform:scale(0.4300,.5);">Water</span>
<svg style="left:854px;top:247px" width="12" height="12" viewBox="0 0 12 12"><path d="M5 5.9V2H6.6V5.9" fill="none" stroke="#111" stroke-width="1.1"/><path d="M1.4 6.4H9.9" stroke="#111" stroke-width="1.1"/><path d="M2 8L2.9 10.4L3.9 8L4.9 10.4L5.8 8L6.8 10.4L7.7 8L8.6 10.4L9.5 8" fill="none" stroke="#108818" stroke-width="1"/></svg>
<span class="t" style="left:868.70px;top:249.15px;color:#111;transform:scale(0.4300,.5);">Earthquake</span>
<svg style="left:854px;top:264px" width="12" height="12" viewBox="0 0 12 12"><rect x=".7" y="4.1" width="5.6" height="6.3" rx=".6" fill="#e4e400" stroke="#484800" stroke-width="1"/><rect x="4.7" y="1" width="5.4" height="6.2" rx=".6" fill="#e4e400" stroke="#484800" stroke-width="1"/><path d="M3.4 5.8V8.8M7 2.6H8.2V4H7V5.4H8.4" fill="none" stroke="#484800" stroke-width=".8"/></svg>
<span class="t" style="left:868.70px;top:265.75px;color:#111;transform:scale(0.4300,.5);">Stage settings</span>
<div class="a" style="left:851.1px;top:281px;width:77px;height:17px;background:#cce4f7;border:1px solid #84b9e6;box-sizing:border-box;"></div>
<svg style="left:854px;top:283px" width="12" height="12" viewBox="0 0 12 12"><path d="M.6 8.6C3 11.8 7.8 12 9.7 8.4C10.7 6.6 10.8 5.6 10.4 4.6L8.6 4.2C8 6.4 5 8.6 .6 8.6Z" fill="#f02808" stroke="#d01808" stroke-width=".5"/><path d="M3 9C6 9.3 8.3 7 9.2 5C9.6 7 8.2 10 5.4 10.3C4.4 10.3 3.6 9.9 3 9Z" fill="#ffe818"/><path d="M8.6 4.3L8.7 2.3L9.6 2.5L10.4 4.7Z" fill="#3a2a2a"/></svg>
<span class="t" style="left:868.70px;top:285.05px;color:#111;transform:scale(0.4300,.5);">Analysis</span>
<div class="a" style="left:851.5px;top:143px;width:77px;height:1px;background:#d8d8d8;"></div>
<div class="a" style="left:851.5px;top:279.3px;width:77px;height:1px;background:#e0e0e0;"></div>
<div class="a" style="left:848.2px;top:535.2px;width:83px;height:11.5px;background:#d6d6d6;"></div>
<span class="t" style="left:851.00px;top:536.95px;transform:scale(0.4520,.5);">Outputs</span>
<div class="a" style="left:921.2px;top:543.2px;width:4.6px;height:1.8px;background:#222;"></div>
<div class="a" style="left:850.8px;top:550.3px;width:77.2px;height:16.8px;background:#e1e1e1;border:1px solid #d7d7d7;box-sizing:border-box;"></div>
<svg style="left:854.2px;top:553px" width="12" height="11.4" viewBox="0 0 12 11.4"><rect x=".6" y=".6" width="10" height="9.9" fill="#e6e6e6" stroke="#7c7c7c" stroke-width="1.1"/><path d="M3.2 2.4V8.4M3.2 5.2H5.2Q6.8 5.2 6.8 6.8Q6.8 8.4 5.2 8.4H3.2M3.2 3.4L4.8 2.2" fill="none" stroke="#3a3a3a" stroke-width="1.2"/><path d="M7.8 1.6L9.9 3.8L7.8 6L5.7 3.8Z" fill="#12b012"/><path d="M7.8 1V6.6M5 3.8H10.6" stroke="#12b012" stroke-width="1.3"/></svg>
<span class="t" style="left:869.00px;top:553.95px;color:#111;transform:scale(0.4406,.5);">Add Picture</span>
<span class="t" style="left:851.00px;top:571.15px;color:#111;transform:scale(0.4232,.5);">Analysis :</span>
<span class="t" style="left:923.60px;top:571.15px;color:#111;transform:scale(0.4393,.5);">0</span>
<span class="t" style="left:851.00px;top:584.75px;color:#111;transform:scale(0.4372,.5);">Total :</span>
<span class="t" style="left:923.60px;top:584.75px;color:#111;transform:scale(0.4393,.5);">0</span>
<div class="a" style="left:850.8px;top:596.9px;width:77.2px;height:16.6px;background:#e1e1e1;border:1px solid #d7d7d7;box-sizing:border-box;"></div>
<svg style="left:854.3px;top:599.8px" width="12" height="11.4" viewBox="0 0 12 11.4"><rect x=".6" y=".6" width="10" height="9.9" fill="#e6e6e6" stroke="#7c7c7c" stroke-width="1.1"/><path d="M3.2 2.4V8.4M3.2 5.2H5.2Q6.8 5.2 6.8 6.8Q6.8 8.4 5.2 8.4H3.2M3.2 3.4L4.8 2.2" fill="none" stroke="#3a3a3a" stroke-width="1.2"/><path d="M7.6 2.2H9.6M7.6 3.8H9.6" stroke="#555" stroke-width=".8"/><path d="M7.6 7.2H9.6M7.6 8.6H9.6" stroke="#999" stroke-width=".8" stroke-dasharray=".8 .5"/></svg>
<span class="t" style="left:869.00px;top:600.75px;color:#111;transform:scale(0.4363,.5);">List of Pictures</span>
<div class="a" style="left:850.8px;top:621.1px;width:77.2px;height:16.4px;background:#e1e1e1;border:1px solid #d7d7d7;box-sizing:border-box;"></div>
<svg style="left:855px;top:624.1px" width="11" height="10" viewBox="0 0 11 10"><rect x=".6" y=".6" width="9.2" height="8.4" fill="#b4b4b4" stroke="#4a4a4a" stroke-width="1.1"/><path d="M3.6 1V9M6.8 1V9" stroke="#4a4a4a" stroke-width="1"/></svg>
<span class="t" style="left:869.00px;top:624.85px;color:#111;transform:scale(0.4423,.5);">List of Annexes</span>
<div class="a" style="left:850.8px;top:644.6px;width:36.6px;height:30.8px;background:#e1e1e1;border:1px solid #d7d7d7;box-sizing:border-box;"></div>
<svg style="left:861.0px;top:649.4px" width="17.2" height="20.4" viewBox="0 0 20 22"><path d="M4.2 8.2V1.2Q4.2 .6 4.8 .6H15.2Q15.8 .6 15.8 1.2V8.2" fill="#fff" stroke="#555" stroke-width=".9"/><rect x=".8" y="7" width="18.4" height="8.4" rx="1.6" fill="#b8a678" stroke="#5a4e2e" stroke-width=".9"/><rect x="3.6" y="10.8" width="12.8" height="2" fill="#4a4028"/><rect x="4.6" y="12.4" width="10.8" height="8.6" fill="#f2f2f2" stroke="#444" stroke-width=".8"/><rect x="6" y="14" width="8" height="2" fill="#999"/><path d="M6 17.4H14M6 19H14" stroke="#666" stroke-width=".7"/></svg>
<div class="a" style="left:891.3px;top:644.6px;width:36.6px;height:30.8px;background:#e1e1e1;border:1px solid #d7d7d7;box-sizing:border-box;"></div>
<svg style="left:901.5px;top:649.4px" width="17.2" height="20.4" viewBox="0 0 20 22"><path d="M4.2 8.2V1.2Q4.2 .6 4.8 .6H15.2Q15.8 .6 15.8 1.2V8.2" fill="#fff" stroke="#555" stroke-width=".9"/><rect x=".8" y="7" width="18.4" height="8.4" rx="1.6" fill="#b8a678" stroke="#5a4e2e" stroke-width=".9"/><rect x="3.6" y="10.8" width="12.8" height="2" fill="#4a4028"/><rect x="4.6" y="12.4" width="10.8" height="8.6" fill="#f2f2f2" stroke="#444" stroke-width=".8"/><path d="M6.4 13.8H13.6V19.8H6.4Z" fill="#e02020"/><path d="M6.4 13.8L13.6 19.8" stroke="#fff" stroke-width="1"/></svg>
<div class="a" style="left:850.8px;top:677.4px;width:77.2px;height:17.4px;background:#e1e1e1;border:1px solid #d7d7d7;box-sizing:border-box;"></div>
<svg style="left:854.3px;top:680.4px" width="11.4" height="11.4" viewBox="0 0 13 12"><rect x=".5" y=".5" width="5.6" height="6.8" fill="#eee" stroke="#333" stroke-width=".8"/><rect x="6.4" y="5" width="5.6" height="6.4" fill="#eee" stroke="#333" stroke-width=".8"/><path d="M2 2.2V5.4H4" fill="none" stroke="#444" stroke-width=".7"/><path d="M7.4 1.6L9.6 3.2L7.6 4.6" fill="none" stroke="#109a10" stroke-width="1"/></svg>
<span class="t" style="left:869.00px;top:682.25px;color:#111;transform:scale(0.4335,.5);">Copy <u>v</u>iew</span>
<div class="a" style="left:0px;top:526px;width:846px;height:1px;background:#9a9a9a;"></div>
<div class="a" style="left:0px;top:527px;width:846px;height:1px;background:#dcdcdc;"></div>
<svg style="left:419px;top:525px" width="10" height="4" viewBox="0 0 10 4"><path d="M.5 .5H9.5Q9.5 3.5 5 3.5Q.5 3.5 .5 .5Z" fill="#e4e4e4" stroke="#999" stroke-width=".7"/></svg>
<div class="a" style="left:2.2px;top:531.5px;width:12.6px;height:165.6px;background:#d5d5d5;"></div>
<div class="a" style="left:9.5px;top:535.8px;width:1.9px;height:4.6px;background:#1a1a1a;"></div>
<span class="t" style="left:4.02px;top:694.80px;transform:rotate(-90deg) scale(0.4147,.5);">Analysis</span>
<span class="t" style="left:18.00px;top:535.95px;color:#111;transform:scale(0.4232,.5);">Analysis :</span>
<div class="a" style="left:54px;top:531.5px;width:17.3px;height:17.2px;background:#e1e1e1;border:1px solid #d7d7d7;box-sizing:border-box;"></div>
<svg style="left:57.9px;top:534.8px" width="11" height="11" viewBox="0 0 11 11"><rect x=".8" y=".8" width="8.8" height="8.8" rx="2" fill="#f4fbf4" stroke="#3cae3c" stroke-width="1.1"/><path d="M5.2 2.6V7.8M2.6 5.2H7.8" stroke="#1a8a1a" stroke-width="1.5"/></svg>
<div class="a" style="left:74.1px;top:531.5px;width:17.7px;height:17.2px;background:#e1e1e1;border:1px solid #d7d7d7;box-sizing:border-box;"></div>
<svg style="left:77.7px;top:534.8px" width="11" height="11" viewBox="0 0 11 11"><rect x=".8" y=".8" width="8.8" height="8.8" rx="2" fill="#fbf2f2" stroke="#c04848" stroke-width="1.2"/><path d="M2.6 5.2H7.8" stroke="#b02020" stroke-width="1.6"/></svg>
<div class="a" style="left:94.9px;top:531.2px;width:21.7px;height:17.8px;background:#cce4f7;border:1px solid #84b9e6;box-sizing:border-box;"></div>
<span class="t" style="left:101.05px;top:535.95px;color:#111;transform:scale(0.4746,.5);">[1]</span>
<div class="a" style="left:16px;top:552px;width:826px;height:1px;background:#e0e0e0;"></div>
<div class="a" style="left:18px;top:555.9px;width:7.2px;height:41.2px;background:#10bc10;"></div>
<div class="a" style="left:25.2px;top:555.9px;width:42.6px;height:41.2px;background:#e1e1e1;border:1px solid #d7d7d7;box-sizing:border-box;"></div>
<svg style="left:35.5px;top:560.5px" width="21" height="21" viewBox="0 0 21 21"><path d="M4 1.7H15.6M4 17.4H15.6" stroke="#3a3a3a" stroke-width="2.6" stroke-dasharray="1.3 .75"/><path d="M2.3 4V15.6M18 4V15.6" stroke="#3a3a3a" stroke-width="2.6" stroke-dasharray="1.3 .75"/><rect x="3.6" y="3" width="13.1" height="13.1" fill="#050505"/><rect x="5.7" y="4.9" width="8.8" height="9.4" fill="none" stroke="#e8e8e8" stroke-width=".8"/><path d="M9.3 8V11.2H10.3Q11.8 11.2 11.8 9.6Q11.8 8 10.3 8Z" fill="none" stroke="#d8d8d8" stroke-width=".7"/><circle cx="15.6" cy="14.8" r="4.7" fill="#0e9c0e" stroke="#f4f4f4" stroke-width=".8"/><path d="M14 12.2L18.5 14.8L14 17.4Z" fill="#fff"/></svg>
<span class="t" style="left:32.60px;top:585.35px;color:#111;transform:scale(0.4278,.5);"><u>A</u>nalyze</span>
<span class="t" style="left:78.00px;top:559.95px;color:#111;transform:scale(0.4287,.5);">Slip surface :</span>
<div class="a" style="left:126px;top:556px;width:51.5px;height:14.6px;background:#ffffff;"></div>
<span class="t" style="left:128.20px;top:558.55px;color:#111;transform:scale(0.4309,.5);">circular</span>
<svg style="left:167.6px;top:562px" width="6" height="4" viewBox="0 0 6 4"><path d="M0 0H5.4L2.7 3.2Z" fill="#000"/></svg>
<div class="a" style="left:181.2px;top:555.4px;width:103px;height:16.9px;background:#e1e1e1;border:1px solid #d7d7d7;box-sizing:border-box;"></div>
<span class="t" style="left:212.60px;top:559.75px;color:#111;transform:scale(0.4265,.5);">Replace graphically</span>
<svg style="left:185.5px;top:558.4px" width="24" height="12" viewBox="0 0 24 12"><g transform="translate(-.9 -.3)"><path d="M2.2 6.6A3.6 3.6 0 0 1 8.2 3.6" fill="none" stroke="#d81818" stroke-width="1.7"/><path d="M9.6 1.4V5.4H5.8Z" fill="#d81818"/><path d="M9.4 5.6A3.6 3.6 0 0 1 3.4 8.8" fill="none" stroke="#18a018" stroke-width="1.7"/><path d="M2 11V7H5.8Z" fill="#18a018"/></g><g transform="translate(15 6.2) rotate(38)"><ellipse rx="3.1" ry="4.3" fill="#fafafa" stroke="#2a2a2a" stroke-width=".9"/><path d="M-3.1 -1H3.1" stroke="#2a2a2a" stroke-width=".8"/><path d="M-3.1 -1.1A3.1 4.3 0 0 1 0 -4.3V-1.1Z" fill="#3c3c3c"/></g><path d="M17.8 2.6Q19.6 .6 21.6 2" fill="none" stroke="#333" stroke-width=".9"/><path d="M17.2 1.2L19 2.8" stroke="#18a018" stroke-width="1.3"/></svg>
<div class="a" style="left:287.3px;top:555.4px;width:67.3px;height:16.9px;background:#e1e1e1;border:1px solid #d7d7d7;box-sizing:border-box;"></div>
<span class="t" style="left:305.30px;top:559.75px;color:#111;transform:scale(0.4438,.5);">Edit textually</span>
<svg style="left:291.8px;top:558.4px" width="12" height="12" viewBox="0 0 12 12"><path d="M.8 9.8H8.6" stroke="#333" stroke-width=".9"/><path d="M2.8 8.4L8.4 1.8" stroke="#18a018" stroke-width="1.7"/><path d="M2 9.2L2.4 7.6L3.5 8.5Z" fill="#222"/></svg>
<div class="a" style="left:358.4px;top:555.4px;width:49.2px;height:16.9px;background:#e1e1e1;border:1px solid #d7d7d7;box-sizing:border-box;"></div>
<span class="t" style="left:376.20px;top:559.75px;color:#111;transform:scale(0.4103,.5);">Remove</span>
<svg style="left:362.5px;top:558.4px" width="11" height="12" viewBox="0 0 11 12"><path d="M1.6 1.4L8.2 7.6M8.2 1.4L1.6 7.6" stroke="#e01818" stroke-width="1.7"/><path d="M-.4 9.8H9" stroke="#333" stroke-width=".9"/></svg>
<div class="a" style="left:411.3px;top:555.4px;width:89.3px;height:16.9px;background:#e1e1e1;border:1px solid #d7d7d7;box-sizing:border-box;"></div>
<span class="t" style="left:429.40px;top:559.75px;color:#111;transform:scale(0.4434,.5);">Convert to polygon</span>
<svg style="left:414.8px;top:559.9px" width="10.4" height="8.6" viewBox="0 -1.2 12 12.8" preserveAspectRatio="none"><path d="M4.6 1.2H3Q1.2 1.2 1.2 3V7.4Q1.2 9.2 3 9.2H4.2" fill="none" stroke="#222" stroke-width="1.3"/><path d="M3.4 7.2L5.4 9.2L3.4 11" fill="none" stroke="#222" stroke-width="1"/><path d="M7.4 9.2H9Q10.8 9.2 10.8 7.4V3Q10.8 1.2 9 1.2H7.8" fill="none" stroke="#222" stroke-width="1.3"/><path d="M8.6 -.6L6.6 1.2L8.6 3" fill="none" stroke="#222" stroke-width="1"/></svg>
<div class="a" style="left:766.2px;top:555.4px;width:75.7px;height:16.9px;background:#e1e1e1;border:1px solid #d7d7d7;box-sizing:border-box;"></div>
<span class="t" style="left:784.40px;top:559.75px;color:#111;transform:scale(0.4353,.5);">Detailed results</span>
<svg style="left:772px;top:558.6px" width="8" height="11" viewBox="0 0 8 11"><path d="M3.6 .2L.6 5.8H3.2L1.8 10.6L7.4 4H4.6L6.4 .2Z" fill="#12981a"/></svg>
<div class="a" style="left:78px;top:583px;width:7px;height:1px;background:#dadada;"></div>
<div class="a" style="left:182px;top:583px;width:49.4px;height:1px;background:#dadada;"></div>
<span class="t" style="left:87.50px;top:578.55px;color:#111;transform:scale(0.4294,.5);">Parameters of the analysis</span>
<div class="a" style="left:239px;top:583px;width:7px;height:1px;background:#dadada;"></div>
<div class="a" style="left:320.5px;top:583px;width:127px;height:1px;background:#dadada;"></div>
<span class="t" style="left:248.70px;top:578.55px;color:#111;transform:scale(0.4347,.5);">Circular slip surface</span>
<span class="t" style="left:78.00px;top:596.75px;color:#111;transform:scale(0.4497,.5);">Method :</span>
<div class="a" style="left:137.2px;top:593.8px;width:94.5px;height:15.2px;background:#ffffff;border:1px solid #94c0ea;box-sizing:border-box;"></div>
<div class="a" style="left:138.6px;top:595.1999999999999px;width:79.9px;height:12.399999999999999px;background:#0b76d6;"></div>
<span class="t" style="left:139.20px;top:596.85px;color:#fff;transform:scale(0.4300,.5);">Bishop</span>
<svg style="left:221.7px;top:600.0px" width="6" height="4" viewBox="0 0 6 4"><path d="M0 0H5.4L2.7 3.2Z" fill="#000"/></svg>
<span class="t" style="left:78.00px;top:615.55px;color:#111;transform:scale(0.4360,.5);">Analysis type :</span>
<div class="a" style="left:137.2px;top:612.3px;width:94.5px;height:14.6px;background:#ffffff;border:1px solid #d2d2d2;box-sizing:border-box;"></div>
<span class="t" style="left:139.60px;top:615.05px;color:#111;transform:scale(0.4300,.5);">Optimization</span>
<svg style="left:221.7px;top:618.1999999999999px" width="6" height="4" viewBox="0 0 6 4"><path d="M0 0H5.4L2.7 3.2Z" fill="#000"/></svg>
<div class="a" style="left:78px;top:631.3px;width:48px;height:16.8px;background:#e1e1e1;border:1px solid #d7d7d7;box-sizing:border-box;"></div>
<span class="t" style="left:81.60px;top:635.15px;color:#111;transform:scale(0.4339,.5);">Restrictions</span>
<span class="t" style="left:129.50px;top:635.15px;color:#111;transform:scale(0.4480,.5);">is not input</span>
<span class="t" style="left:239.90px;top:596.95px;color:#111;transform:scale(0.4373,.5);">Center :</span>
<span class="t" style="left:277.70px;top:596.95px;color:#111;transform:scale(0.4691,.5);">x =</span>
<div class="a" style="left:293.1px;top:594.4px;width:51px;height:14.4px;background:#f4f4f4;border:1px solid #dcdcdc;box-sizing:border-box;"></div>
<span class="t" style="left:322.50px;top:597.05px;color:#111;transform:scale(0.4300,.5);">11,01</span>
<span class="t" style="left:347.10px;top:596.95px;color:#111;transform:scale(0.4400,.5);">[m]</span>
<span class="t" style="left:368.40px;top:596.95px;color:#111;transform:scale(0.4691,.5);">z =</span>
<div class="a" style="left:383.8px;top:594.4px;width:51px;height:14.4px;background:#f4f4f4;border:1px solid #dcdcdc;box-sizing:border-box;"></div>
<span class="t" style="left:416.93px;top:597.05px;color:#111;transform:scale(0.4300,.5);">2,12</span>
<span class="t" style="left:437.40px;top:596.95px;color:#111;transform:scale(0.4400,.5);">[m]</span>
<span class="t" style="left:239.90px;top:615.55px;color:#111;transform:scale(0.4239,.5);">Radius :</span>
<span class="t" style="left:276.90px;top:615.55px;color:#111;transform:scale(0.4313,.5);">R =</span>
<div class="a" style="left:293.1px;top:613.2px;width:51px;height:14.2px;background:#f4f4f4;border:1px solid #dcdcdc;box-sizing:border-box;"></div>
<span class="t" style="left:326.23px;top:615.75px;color:#111;transform:scale(0.4300,.5);">8,14</span>
<span class="t" style="left:347.10px;top:615.55px;color:#111;transform:scale(0.4400,.5);">[m]</span>
<span class="t" style="left:239.90px;top:634.15px;color:#111;transform:scale(0.4381,.5);">Angles :</span>
<span class="t" style="left:273.80px;top:634.15px;color:#111;transform:scale(0.4805,.5);">α</span>
<span class="t" style="left:279.20px;top:637.24px;font-size:13.0px;color:#111;transform:scale(0.4147,.5);">1</span>
<span class="t" style="left:284.40px;top:634.15px;color:#111;transform:scale(0.4374,.5);">=</span>
<div class="a" style="left:293.1px;top:631.8px;width:51px;height:14.4px;background:#f4f4f4;border:1px solid #dcdcdc;box-sizing:border-box;"></div>
<span class="t" style="left:319.35px;top:634.45px;color:#111;transform:scale(0.4300,.5);">-74,90</span>
<span class="t" style="left:347.40px;top:634.15px;color:#111;transform:scale(0.4302,.5);">[°]</span>
<span class="t" style="left:363.70px;top:634.15px;color:#111;transform:scale(0.4805,.5);">α</span>
<span class="t" style="left:369.10px;top:637.24px;font-size:13.0px;color:#111;transform:scale(0.4423,.5);">2</span>
<span class="t" style="left:374.60px;top:634.15px;color:#111;transform:scale(0.4374,.5);">=</span>
<div class="a" style="left:383.8px;top:631.8px;width:51px;height:14.4px;background:#f4f4f4;border:1px solid #dcdcdc;box-sizing:border-box;"></div>
<span class="t" style="left:412.63px;top:634.45px;color:#111;transform:scale(0.4300,.5);">28,99</span>
<span class="t" style="left:437.80px;top:634.15px;color:#111;transform:scale(0.4302,.5);">[°]</span>
<div class="a" style="left:457px;top:577px;width:386px;height:117.6px;background:#ffffff;"></div>
<span class="t" style="left:460.30px;top:579.55px;font-weight:bold;transform:scale(0.4358,.5);">Slope stability verification (Bishop)</span>
<span class="t" style="left:460.30px;top:591.05px;color:#111;transform:scale(0.4420,.5);">Sum of active forces :</span>
<span class="t" style="left:549.50px;top:591.05px;color:#111;transform:scale(0.4300,.5);">F</span>
<span class="t" style="left:554.70px;top:594.14px;font-size:13.0px;color:#111;transform:scale(0.4300,.5);">a</span>
<span class="t" style="left:559.80px;top:591.05px;color:#111;transform:scale(0.4184,.5);">=</span>
<span class="t" style="left:572.70px;top:591.05px;color:#111;transform:scale(0.4104,.5);">178,55</span>
<span class="t" style="left:600.20px;top:591.05px;color:#111;transform:scale(0.4595,.5);">kN/m</span>
<span class="t" style="left:460.30px;top:603.65px;color:#111;transform:scale(0.4356,.5);">Sum of passive forces :</span>
<span class="t" style="left:549.50px;top:603.65px;color:#111;transform:scale(0.4300,.5);">F</span>
<span class="t" style="left:554.70px;top:606.74px;font-size:13.0px;color:#111;transform:scale(0.4300,.5);">p</span>
<span class="t" style="left:559.80px;top:603.65px;color:#111;transform:scale(0.4184,.5);">=</span>
<span class="t" style="left:572.70px;top:603.65px;color:#111;transform:scale(0.4104,.5);">274,05</span>
<span class="t" style="left:600.20px;top:603.65px;color:#111;transform:scale(0.4595,.5);">kN/m</span>
<span class="t" style="left:460.30px;top:619.05px;color:#111;transform:scale(0.4476,.5);">Sliding moment :</span>
<span class="t" style="left:546.10px;top:619.05px;color:#111;transform:scale(0.4300,.5);">M</span>
<span class="t" style="left:553.30px;top:622.14px;font-size:13.0px;color:#111;transform:scale(0.4300,.5);">a</span>
<span class="t" style="left:559.80px;top:619.05px;color:#111;transform:scale(0.4184,.5);">=</span>
<span class="t" style="left:568.80px;top:619.05px;color:#111;transform:scale(0.4072,.5);">1453,40</span>
<span class="t" style="left:600.20px;top:619.05px;color:#111;transform:scale(0.4596,.5);">kNm/m</span>
<span class="t" style="left:460.30px;top:631.55px;color:#111;transform:scale(0.4414,.5);">Resisting moment :</span>
<span class="t" style="left:546.10px;top:631.55px;color:#111;transform:scale(0.4300,.5);">M</span>
<span class="t" style="left:553.30px;top:634.64px;font-size:13.0px;color:#111;transform:scale(0.4300,.5);">p</span>
<span class="t" style="left:559.80px;top:631.55px;color:#111;transform:scale(0.4184,.5);">=</span>
<span class="t" style="left:568.80px;top:631.55px;color:#111;transform:scale(0.4072,.5);">2230,78</span>
<span class="t" style="left:600.20px;top:631.55px;color:#111;transform:scale(0.4596,.5);">kNm/m</span>
<span class="t" style="left:460.30px;top:644.65px;color:#111;transform:scale(0.4410,.5);">Factor of safety = 1,53 &gt; 1,50</span>
<span class="t" style="left:460.30px;top:656.15px;color:#1ea01e;transform:scale(0.4184,.5);">Slope stability ACCEPTABLE</span>
<div class="a" style="left:0px;top:0px;width:933px;height:1px;background:#b4b4b4;"></div>
<div class="a" style="left:0px;top:699px;width:933px;height:1px;background:#a8a8a8;"></div>
<div class="a" style="left:0px;top:0px;width:1px;height:700px;background:#b0b0b0;"></div>
<div class="a" style="left:932px;top:0px;width:1px;height:700px;background:#b0b0b0;"></div>
</div>
</body></html>
